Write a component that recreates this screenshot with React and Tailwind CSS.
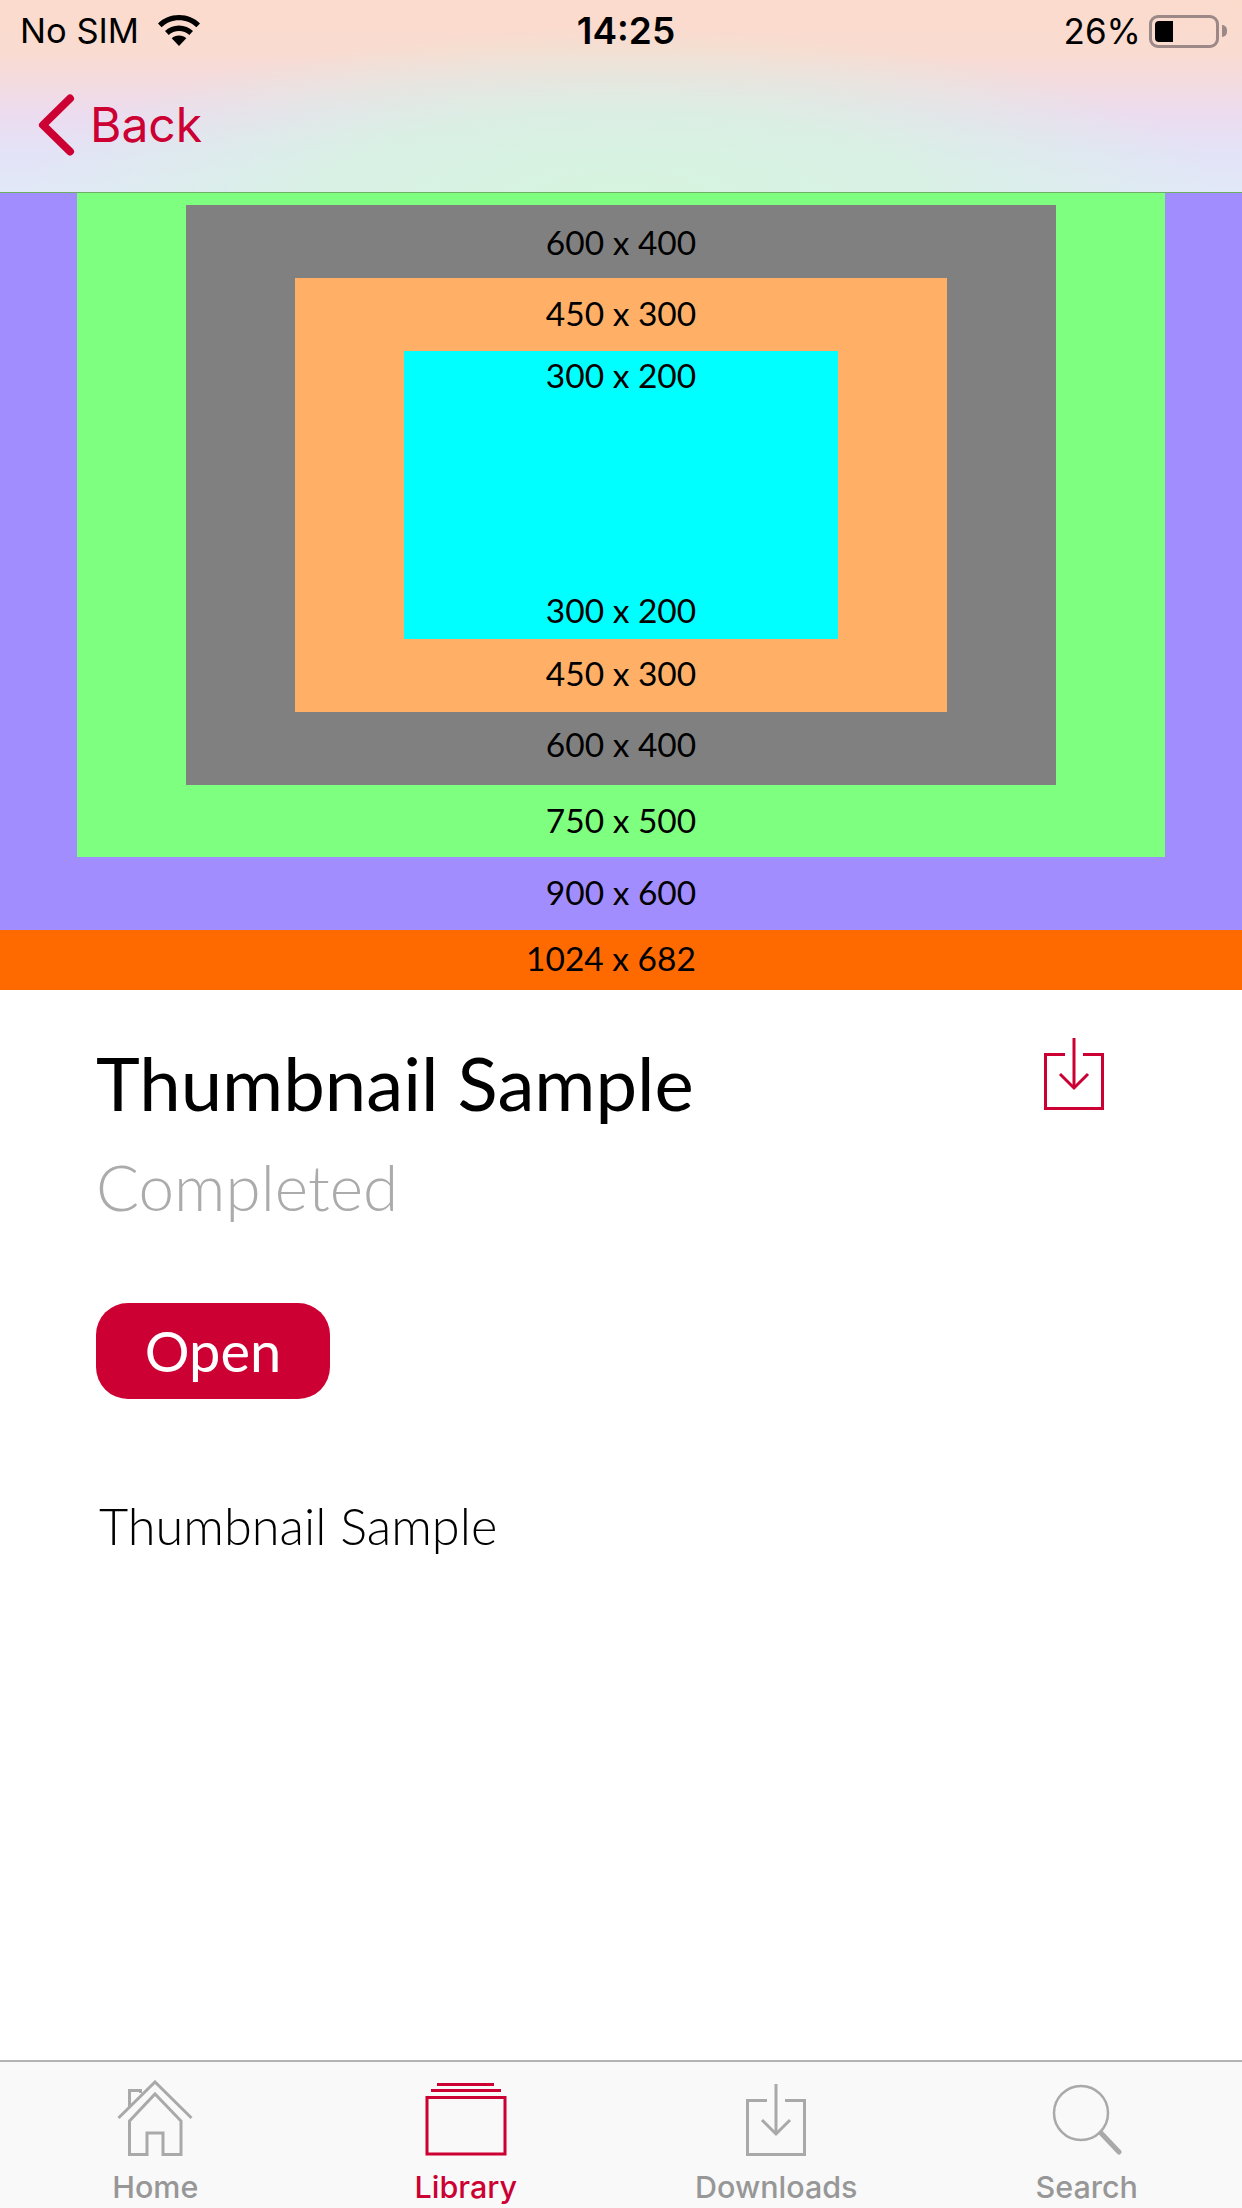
import React from "react";

const sans = "font-['Inter','Liberation_Sans',sans-serif]";

function WifiIcon() {
  return (
    <svg width="44" height="32" viewBox="0 0 44 32" fill="#000">
      <path d="M22 0C13.500 0 6.500 3 1 8.500l3.600 3.800C9.300 7.800 15.300 5.200 22 5.200s12.700 2.600 17.400 7.100L43 8.500C37.500 3 30.500 0 22 0z" />
      <path d="M22 10.500c-5.500 0-10.400 2.100-14 5.600l3.700 3.900c2.800-2.500 6.300-4 10.300-4s7.500 1.500 10.300 4l3.700-3.900c-3.600-3.500-8.500-5.600-14-5.600z" />
      <path d="M22 20.500c-3 0-5.400 1-7.300 2.800L22 31l7.300-7.700c-1.900-1.800-4.300-2.800-7.300-2.800z" />
    </svg>
  );
}

function BatteryIcon() {
  return (
    <div className="flex items-center gap-[3px]">
      <div className="w-[70px] h-[33px] rounded-[9px] border-[3px] border-[#9c8886] p-[3px]">
        <div className="w-[18px] h-full rounded-l-[4px] bg-black" />
      </div>
      <div className="w-[5px] h-[12px] rounded-r-full bg-[#9c8886]" />
    </div>
  );
}

function DownloadIcon({ color }) {
  return (
    <svg width="60" height="72" viewBox="0 0 60 72" fill="none" stroke={color} strokeWidth="3">
      <path d="M21 16.500H1.500v54h57v-54H39" />
      <path d="M30 0v50" />
      <path d="M16 36l14 14 14-14" />
    </svg>
  );
}

function HomeIcon() {
  return (
    <svg width="76" height="76" viewBox="0 0 76 76" fill="none" stroke="#a9a9a9" strokeWidth="3">
      <path d="M1.500 38L38 2l36.500 36" />
      <path d="M12.500 41L38 14l26 27v33.500H46V53H30v21.500H12.500z" />
      <path d="M12.500 27V10.500h11V13" />
    </svg>
  );
}

function LibraryIcon() {
  return (
    <svg width="82" height="74" viewBox="0 0 82 74" fill="none" stroke="#cc0033">
      <path d="M12 2.500h57" strokeWidth="3" />
      <path d="M6 8.500h70" strokeWidth="3" />
      <path d="M2 15.500h78v56.500H2z" strokeWidth="3" />
    </svg>
  );
}

function SearchIcon() {
  return (
    <svg width="70" height="72" viewBox="0 0 70 72" fill="none" stroke="#a9a9a9">
      <circle cx="29" cy="29" r="27" strokeWidth="2.500" />
      <path d="M49 49l18 19" strokeWidth="5" strokeLinecap="round" />
    </svg>
  );
}

function Tab({ icon, label, active }) {
  return (
    <div className="flex flex-col items-center">
      <div className="h-[76px] flex items-end justify-center">{icon}</div>
      <span className={`mt-[14px] text-[30.5px] leading-[34px] font-medium ${sans} ${active ? "text-[#cc0033]" : "text-[#979797]"}`}>
        {label}
      </span>
    </div>
  );
}

function Label({ children, className = "" }) {
  return <div className={`text-center text-[33.500px] leading-[40px] text-black font-['Lato',sans-serif] ${className}`}>{children}</div>;
}

export default function App() {
  return (
    <div className="w-[1242px] h-[2208px] flex flex-col bg-white overflow-hidden">
      {/* Status + nav */}
      <header
        className="h-[193px] border-b border-[#6cae63] bg-[radial-gradient(ellipse_48%_85%_at_50%_100%,rgba(214,244,223,1)_0%,rgba(214,244,223,0.75)_50%,rgba(214,244,223,0)_100%),linear-gradient(180deg,#fadbcc_0%,#fadbd0_27%,#ecdcf0_60%,#e3e3f7_80%,#e1e8f7_100%)]"
      >
        <div className={`h-[62px] flex items-center justify-between pl-[20px] pr-[15px] text-black ${sans}`}>
          <div className="flex items-center gap-[18px] w-[400px]">
            <span className="text-[34.500px] leading-[40px]">No SIM</span>
            <WifiIcon />
          </div>
          <span className="ml-[5px] text-[37px] leading-[40px] font-semibold">14:25</span>
          <div className="flex items-center justify-end gap-[8px] w-[400px]">
            <span className="text-[35px] leading-[40px]">26%</span>
            <BatteryIcon />
          </div>
        </div>
        <div className="h-[64px] mt-[31px] flex items-center pl-[38px] gap-[15px] text-[#cc0033]">
          <svg width="37" height="62" viewBox="0 0 37 62" fill="none" stroke="#cc0033" strokeWidth="8" strokeLinecap="round" strokeLinejoin="round">
            <path d="M32 4.500L5 31l27 26.500" />
          </svg>
          <span className={`text-[48px] leading-[60px] ${sans}`}>Back</span>
        </div>
      </header>

      {/* Thumbnail sample image */}
      <div className="h-[797px] bg-[#a28dff] flex flex-col items-center">
        <div className="w-[1088px] h-[664px] bg-[#7fff7f] flex flex-col items-center pt-[12px]">
          <div className="w-[870px] h-[580px] bg-[#808080] flex flex-col items-center">
            <Label className="h-[73px] pt-[17px]">600 x 400</Label>
            <div className="w-[652px] h-[434px] bg-[#ffb066] flex flex-col items-center">
              <Label className="h-[73px] pt-[15px]">450 x 300</Label>
              <div className="w-[434px] h-[288px] bg-[#00ffff] flex flex-col items-center justify-between">
                <Label className="pt-[4px]">300 x 200</Label>
                <Label className="pb-[9px]">300 x 200</Label>
              </div>
              <Label className="pt-[14px]">450 x 300</Label>
            </div>
            <Label className="pt-[12px]">600 x 400</Label>
          </div>
          <Label className="pt-[15px]">750 x 500</Label>
        </div>
        <Label className="h-[73px] pt-[15px]">900 x 600</Label>
        <div className="w-full h-[60px] bg-[#ff6a00] flex justify-center">
          <Label className="pt-[8px] mr-[20px]">1024 x 682</Label>
        </div>
      </div>

      {/* Details */}
      <main className="flex-1 px-[96px] font-['Lato',sans-serif]">
        <div className="flex justify-between items-start pr-[42px]">
          <div>
            <h1 className="mt-[48px] text-[74.300px] leading-[90px] text-black font-normal">Thumbnail Sample</h1>
            <p className="mt-[23px] text-[63.800px] leading-[72px] font-light text-[#ababab]">Completed</p>
          </div>
          <div className="mt-[48px]">
            <DownloadIcon color="#cc0033" />
          </div>
        </div>
        <button className="mt-[80px] w-[234px] h-[96px] rounded-[32px] bg-[#cc0033] text-white text-[56px] leading-[60px]">
          Open
        </button>
        <p className="mt-[97px] ml-[3px] text-[50.500px] leading-[60px] font-light text-black">Thumbnail Sample</p>
      </main>

      {/* Tab bar */}
      <nav className="h-[148px] border-t-2 border-[#b3b3b3] bg-[#f9f9f9] grid grid-cols-4 pt-[18px]">
        <Tab icon={<HomeIcon />} label="Home" />
        <Tab icon={<LibraryIcon />} label="Library" active />
        <Tab icon={<DownloadIcon color="#a9a9a9" />} label="Downloads" />
        <Tab icon={<SearchIcon />} label="Search" />
      </nav>
    </div>
  );
}
